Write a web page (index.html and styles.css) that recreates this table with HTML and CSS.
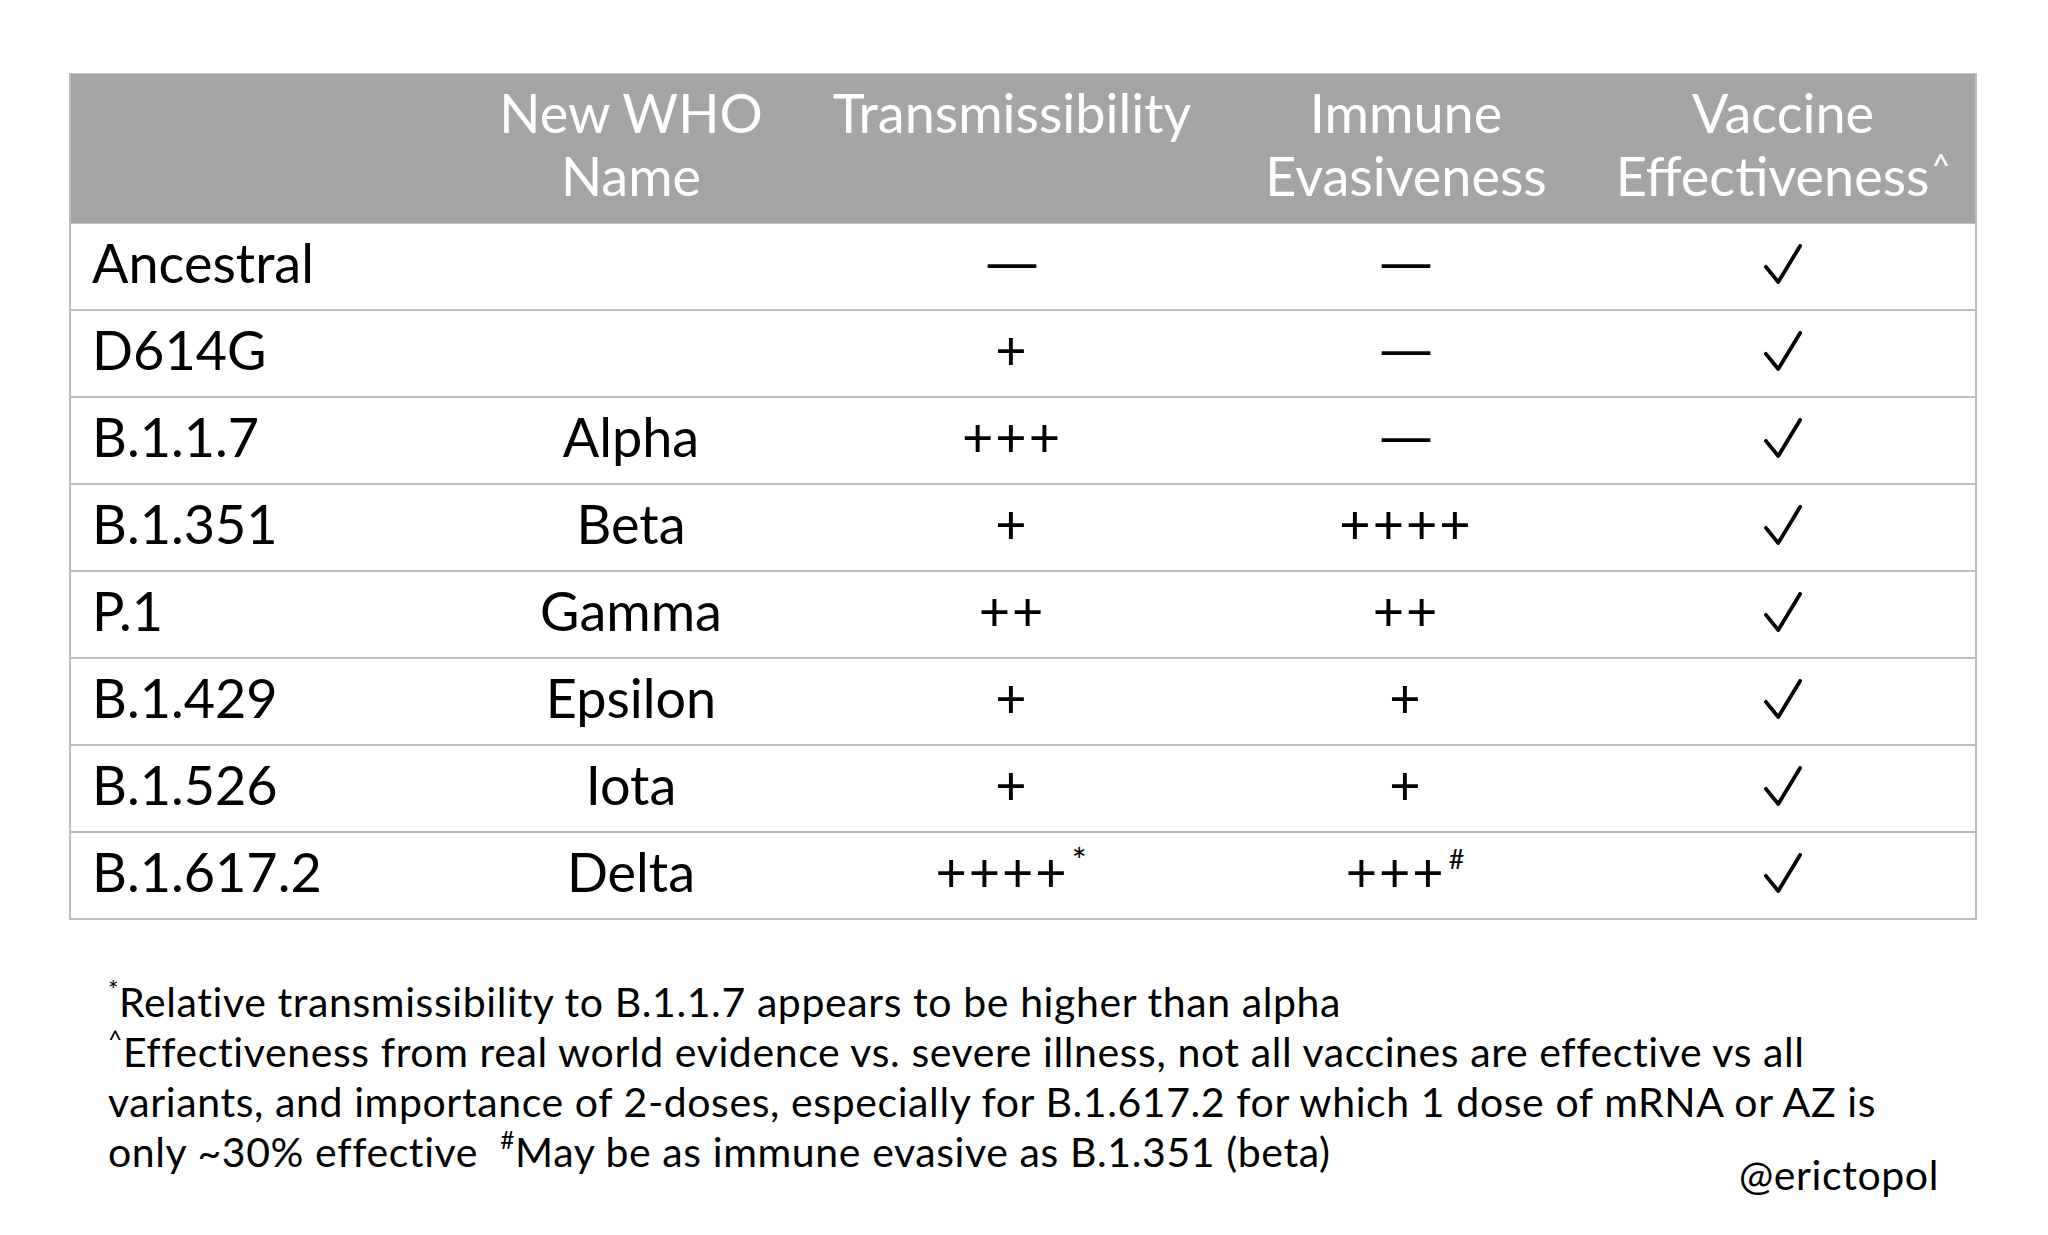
FILE: index.html
```html
<!DOCTYPE html>
<html lang="en">
<head>
<meta charset="utf-8">
<title>SARS-CoV-2 Variants</title>
<link rel="stylesheet" href="styles.css">
</head>
<body>
<main class="page">
  <div class="table">
    <div class="row head">
      <div class="cell"></div>
      <div class="cell c">New WHO<br>Name</div>
      <div class="cell c">Transmissibility</div>
      <div class="cell c">Immune<br>Evasiveness</div>
      <div class="cell c">Vaccine<br>Effectiveness<span class="hat">^</span></div>
    </div>

    <div class="row">
      <div class="cell">Ancestral</div>
      <div class="cell c"></div>
      <div class="cell c dash">—</div>
      <div class="cell c dash">—</div>
      <div class="cell c"><svg class="check" viewBox="0 0 40 42"><polyline points="2,24 15,40 38,2"/></svg></div>
    </div>
    <div class="row">
      <div class="cell">D614G</div>
      <div class="cell c"></div>
      <div class="cell c sym">+</div>
      <div class="cell c dash">—</div>
      <div class="cell c"><svg class="check" viewBox="0 0 40 42"><polyline points="2,24 15,40 38,2"/></svg></div>
    </div>
    <div class="row">
      <div class="cell">B.1.1.7</div>
      <div class="cell c">Alpha</div>
      <div class="cell c sym">+++</div>
      <div class="cell c dash">—</div>
      <div class="cell c"><svg class="check" viewBox="0 0 40 42"><polyline points="2,24 15,40 38,2"/></svg></div>
    </div>
    <div class="row">
      <div class="cell">B.1.351</div>
      <div class="cell c">Beta</div>
      <div class="cell c sym">+</div>
      <div class="cell c sym">++++</div>
      <div class="cell c"><svg class="check" viewBox="0 0 40 42"><polyline points="2,24 15,40 38,2"/></svg></div>
    </div>
    <div class="row">
      <div class="cell">P.1</div>
      <div class="cell c">Gamma</div>
      <div class="cell c sym">++</div>
      <div class="cell c sym">++</div>
      <div class="cell c"><svg class="check" viewBox="0 0 40 42"><polyline points="2,24 15,40 38,2"/></svg></div>
    </div>
    <div class="row">
      <div class="cell">B.1.429</div>
      <div class="cell c">Epsilon</div>
      <div class="cell c sym">+</div>
      <div class="cell c sym">+</div>
      <div class="cell c"><svg class="check" viewBox="0 0 40 42"><polyline points="2,24 15,40 38,2"/></svg></div>
    </div>
    <div class="row">
      <div class="cell">B.1.526</div>
      <div class="cell c">Iota</div>
      <div class="cell c sym">+</div>
      <div class="cell c sym">+</div>
      <div class="cell c"><svg class="check" viewBox="0 0 40 42"><polyline points="2,24 15,40 38,2"/></svg></div>
    </div>
    <div class="row last">
      <div class="cell">B.1.617.2</div>
      <div class="cell c">Delta</div>
      <div class="cell c sym">++++<sup class="star">*</sup></div>
      <div class="cell c sym">+++<sup class="hash">#</sup></div>
      <div class="cell c"><svg class="check" viewBox="0 0 40 42"><polyline points="2,24 15,40 38,2"/></svg></div>
    </div>
  </div>

  <footer class="foot">
    <p class="notes"><sup class="fs">*</sup>Relative transmissibility to B.1.1.7 appears to be higher than alpha<br><sup class="fs">^</sup>Effectiveness from real world evidence vs. severe illness, not all vaccines are effective vs all<br>variants, and importance of 2-doses, especially for B.1.617.2 for which 1 dose of mRNA or AZ is<br>only ~30% effective&nbsp; <sup class="fs">#</sup>May be as immune evasive as B.1.351 (beta)</p>
    <p class="sig">@erictopol</p>
  </footer>
</main>
</body>
</html>
```

FILE: styles.css
```css
html, body {
  margin: 0;
  padding: 0;
  background: #ffffff;
}

body {
  font-family: Lato, "Open Sans", "Noto Sans", sans-serif;
  color: #000000;
}

.page {
  padding: 73px 0 40px 69px;
  width: 1908px;
}

.table {
  width: 1908px;
  box-sizing: border-box;
  border: 2px solid #bdbdbd;
  border-top: 1px solid #bdbdbd;
}

.row {
  display: grid;
  grid-template-columns: 388px 344px 418px 370px 384px;
  height: 87px;
  box-sizing: border-box;
  border-bottom: 2px solid #bdbdbd;
  font-size: 54px;
  line-height: 75px;
  padding-top: 1px;
}

.row.last {
  border-bottom: none;
  height: 85px;
}

.row.head {
  height: 150px;
  background: #a5a5a5;
  color: #ffffff;
  border-bottom: 1px solid #c8c8c8;
  font-size: 54px;
  line-height: 63px;
  padding-top: 7px;
}

.cell {
  white-space: nowrap;
  padding-left: 21px;
}

.cell.c {
  padding-left: 0;
  text-align: center;
}

.cell.sym {
  letter-spacing: 2px;
}

.cell.dash {
  font-family: "DejaVu Sans", sans-serif;
}

.hat {
  font-size: 0.6em;
  vertical-align: 0.55em;
  line-height: 0;
  margin-left: 2px;
}

.star {
  font-size: 0.65em;
  vertical-align: 0.55em;
  line-height: 0;
  margin-left: 3px;
}

.hash {
  font-size: 0.5em;
  vertical-align: 0.85em;
  line-height: 0;
  margin-left: 3px;
}

.check {
  width: 38px;
  height: 40px;
  margin-top: 19px;
  display: inline-block;
  vertical-align: top;
}

.check polyline {
  fill: none;
  stroke: #000000;
  stroke-width: 4;
  stroke-linecap: round;
  stroke-linejoin: round;
}

.foot {
  margin-top: 57px;
  padding: 0 38px 0 39px;
}

.notes {
  margin: 0;
  font-size: 41px;
  line-height: 50px;
  letter-spacing: 0.6px;
  white-space: nowrap;
}

.fs {
  font-size: 0.6em;
  vertical-align: 0.75em;
  line-height: 0;
}

.sig {
  margin: -27px 0 0 0;
  text-align: right;
  font-size: 41px;
  line-height: 50px;
  letter-spacing: 0.6px;
}
```
